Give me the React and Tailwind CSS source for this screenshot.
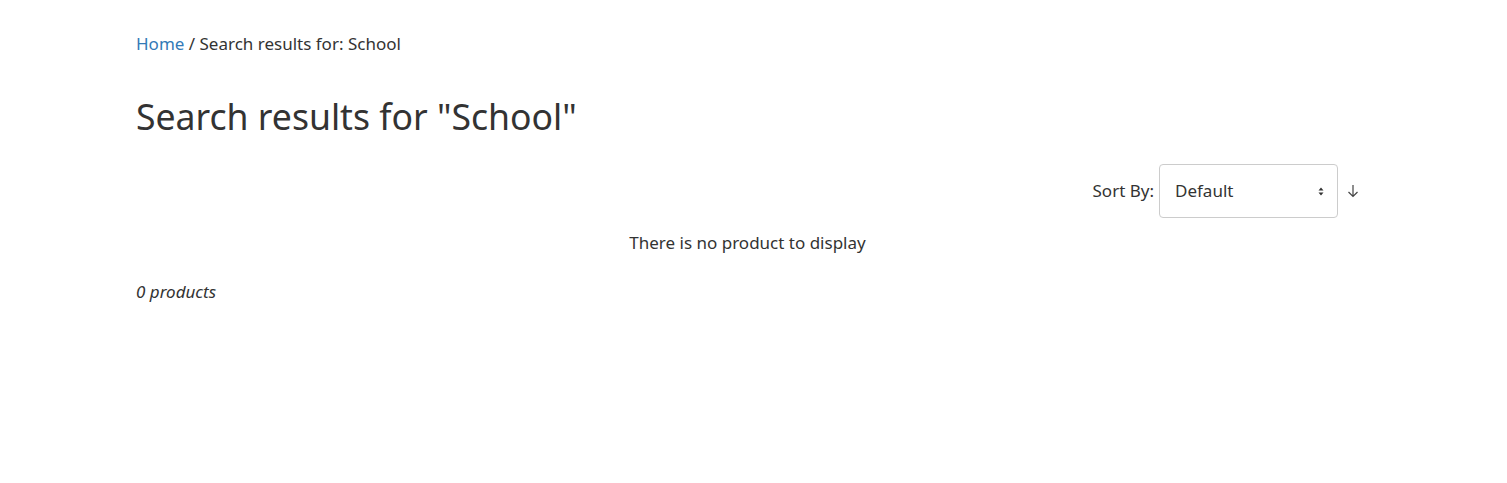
export default function App() {
  return (
    <div className="min-h-[483px] bg-white text-[#333] [font-family:'Noto_Sans','Open_Sans',sans-serif]">
      <div className="ml-[136px] w-[1223px] pt-[32px]">
        <nav className="text-[17px] leading-[24px]">
          <a className="text-[#337ab7]" href="#">Home</a>
          <span> / Search results for: School</span>
        </nav>
        <h1 className="mt-[38px] text-[35.6px] leading-[44px] font-normal">Search results for "School"</h1>
        <div className="mt-[26px] flex items-center justify-end">
          <span className="text-[17px] mr-[5px]">Sort By:</span>
          <div className="relative flex h-[54px] w-[179px] items-center rounded-[4px] border border-[#ccc] pl-[15px] text-[17px]">
            Default
            <svg className="absolute right-[13px]" width="6" height="9" viewBox="0 0 6 9">
              <path d="M3 0.5 L5.5 3.5 H0.5 Z M3 8.5 L5.5 5.5 H0.5 Z" fill="#333" />
            </svg>
          </div>
          <svg className="ml-[9px]" width="12" height="14" viewBox="0 0 12 14" fill="none" stroke="#444" strokeWidth="1.2">
            <path d="M6 1 V12.5 M1.5 8 L6 12.5 L10.5 8" />
          </svg>
        </div>
        <p className="mt-[13px] text-center text-[17px] leading-[24px]">There is no product to display</p>
        <p className="mt-[25px] text-[17px] italic leading-[24px]">0 products</p>
      </div>
    </div>
  );
}
